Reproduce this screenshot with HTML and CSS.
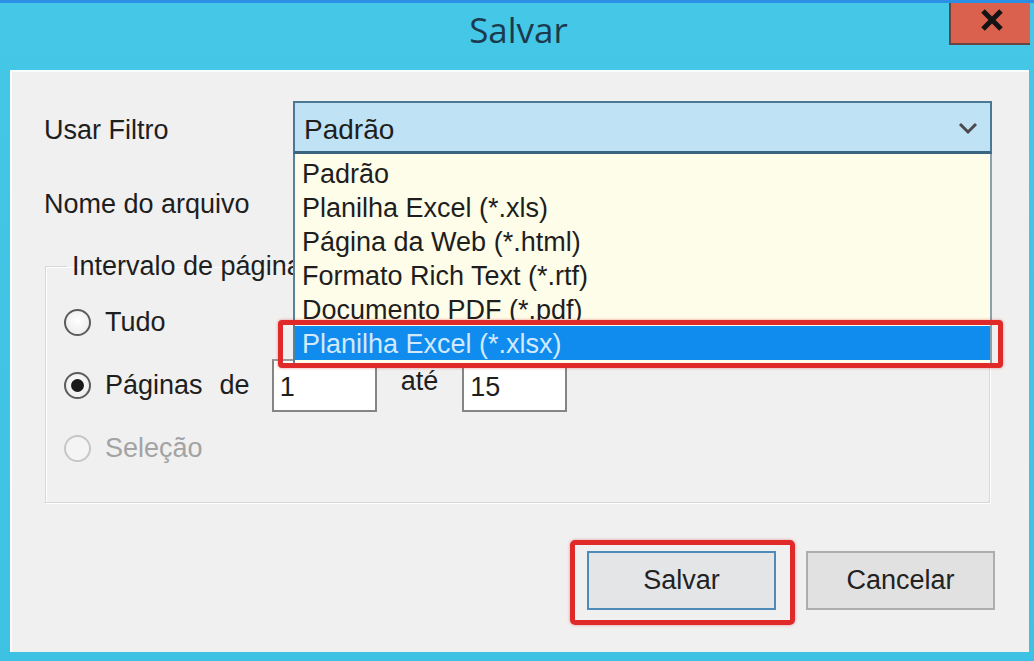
FILE: index.html
```html
<!DOCTYPE html>
<html lang="pt">
<head>
<meta charset="utf-8">
<title>Salvar</title>
<link rel="stylesheet" href="styles.css">
</head>
<body>
<div class="window">
  <div class="titlebar">
    <div class="title">Salvar</div>
    <div class="close" aria-label="Fechar">
      <svg width="24" height="22" viewBox="0 0 24 22"><path d="M3 2 L21 20 M21 2 L3 20" stroke="#141414" stroke-width="5" stroke-linecap="butt"/></svg>
    </div>
  </div>
  <div class="client">
    <div class="row row-filter">
      <div class="label">Usar Filtro</div>
      <div class="combo">
        <span class="combo-text">Padrão</span>
        <svg class="chev" width="20" height="14" viewBox="0 0 20 14"><path d="M2 3 L10 11 L18 3" fill="none" stroke="#4a4a4a" stroke-width="3"/></svg>
      </div>
    </div>
    <div class="row row-name">
      <div class="label">Nome do arquivo</div>
      <div class="textbox"></div>
    </div>
    <fieldset class="group">
      <legend>Intervalo de páginas</legend>
      <div class="opt">
        <span class="radio"></span><span class="opt-text">Tudo</span>
      </div>
      <div class="opt">
        <span class="radio checked"></span><span class="opt-text">Páginas</span>
        <span class="word word-de">de</span>
        <span class="num">1</span>
        <span class="word word-ate">até</span>
        <span class="num">15</span>
      </div>
      <div class="opt disabled">
        <span class="radio"></span><span class="opt-text">Seleção</span>
      </div>
    </fieldset>
    <div class="buttons">
      <div class="btn btn-default">Salvar</div>
      <div class="btn">Cancelar</div>
    </div>
    <ul class="dropdown">
      <li>Padrão</li>
      <li>Planilha Excel (*.xls)</li>
      <li>Página da Web (*.html)</li>
      <li>Formato Rich Text (*.rtf)</li>
      <li>Documento PDF (*.pdf)</li>
      <li class="selected">Planilha Excel (*.xlsx)</li>
    </ul>
  </div>
</div>
</body>
</html>
```
FILE: styles.css
```css
html, body {
  margin: 0;
  padding: 0;
}
body {
  width: 1034px;
  height: 661px;
  overflow: hidden;
  background: #3fc3e4;
  font-family: "Liberation Sans", Arial, sans-serif;
  color: #1e1e1e;
}
.window {
  width: 1034px;
  height: 661px;
  box-sizing: border-box;
  border-top: 3px solid #2b8fe6;
  background: linear-gradient(#45c7e7, #3ec2e3);
}
.titlebar {
  position: relative;
  height: 67px;
  display: flex;
  justify-content: center;
}
.title {
  font-family: "Open Sans", "Noto Sans", sans-serif;
  font-size: 35px;
  line-height: 44px;
  padding-top: 5px;
  color: #1b3a4e;
  padding-left: 3px;
}
.close {
  position: absolute;
  top: 0;
  right: 4px;
  width: 81px;
  height: 42px;
  box-sizing: border-box;
  background: #d9614d;
  border-left: 2px solid #6b4440;
  border-bottom: 2px solid #6b4440;
  display: flex;
  justify-content: center;
  align-items: flex-start;
  padding-top: 6px;
  padding-left: 3px;
}
.client {
  position: relative;
  margin: 0 5px 0 10px;
  height: 582px;
  box-sizing: border-box;
  background: #f0f0f0;
  border-top: 2px solid #fafcfd;
  border-left: 2px solid #fafcfd;
  padding: 29px 37px 0 32px;
  font-size: 27px;
}
.row {
  display: flex;
  align-items: center;
}
.label {
  width: 249px;
  flex: none;
}
.row-filter {
  height: 53px;
}
.row-filter .label {
  padding-top: 6px;
}
.combo {
  flex: 1;
  height: 53px;
  box-sizing: border-box;
  border: 2px solid #4b7892;
  border-bottom: 3px solid #3a6580;
  background: #bfe2f5;
  display: flex;
  align-items: center;
  justify-content: space-between;
  padding: 0 12px 0 9px;
}
.combo-text {
  font-size: 28px;
  padding-top: 5px;
}
.chev {
  margin-top: 2px;
}
.row-name {
  margin-top: 28px;
  height: 44px;
}
.textbox {
  flex: 1;
  height: 44px;
  background: #fff;
  border: 1px solid #7a7a7a;
}
.group {
  margin: 24px 2px 0 1px;
  padding: 14px 18px 27px 18px;
  border: 1px solid #d3d8dc;
  box-shadow: inset 1px 1px 0 #fff, 1px 1px 0 #fff;
  min-width: 0;
}
.group legend {
  margin-left: 3px;
  padding: 0 6px 0 5px;
  line-height: 32px;
}
.opt {
  display: flex;
  align-items: center;
  height: 53px;
}
.opt + .opt {
  margin-top: 10px;
}
.radio {
  width: 27px;
  height: 27px;
  box-sizing: border-box;
  border-radius: 50%;
  border: 2px solid #5c5c5c;
  background: radial-gradient(circle at 50% 40%, #ffffff, #e8e8e8);
  margin-right: 14px;
  flex: none;
  position: relative;
}
.radio.checked::after {
  content: "";
  position: absolute;
  left: 5px;
  top: 5px;
  width: 13px;
  height: 13px;
  border-radius: 50%;
  background: #1a1a1a;
}
.disabled .radio {
  border-color: #c6c6c6;
  background: #f4f4f4;
}
.disabled .opt-text {
  color: #a3a3a3;
}
.word-de {
  margin-left: 17px;
  margin-right: 22px;
}
.word-ate {
  margin: 0 24px 8px 24px;
}
.num {
  width: 105px;
  height: 53px;
  box-sizing: border-box;
  background: #fff;
  border: 2px solid #858585;
  border-top-color: #9a9a9a;
  padding: 9px 0 0 6px;
  line-height: 34px;
}
.buttons {
  display: flex;
  justify-content: flex-end;
  gap: 30px;
  margin-top: 48px;
  margin-right: -3px;
}
.btn {
  width: 189px;
  height: 59px;
  box-sizing: border-box;
  border: 2px solid #adadad;
  background: #e1e1e1;
  display: flex;
  align-items: center;
  justify-content: center;
  color: #222;
  position: relative;
}
.btn-default {
  border-color: #4f8bb8;
  background: #e3e5e7;
}
.btn-default::after {
  content: "";
  position: absolute;
  left: -19px;
  right: -21px;
  top: -13px;
  bottom: -17px;
  border: 5px solid #e02a2a;
  border-radius: 5px;
  box-shadow: 0 0 3px rgba(220, 40, 40, 0.5);
}
.dropdown {
  position: absolute;
  left: 281px;
  top: 82px;
  width: 699px;
  height: 212px;
  box-sizing: border-box;
  margin: 0;
  padding: 2px 0 0 0;
  list-style: none;
  background: #fefde9;
  border: 2px solid #55839c;
  border-top: none;
  border-right: 2px solid #8aa0ac;
}
.dropdown li {
  height: 34px;
  line-height: 36px;
  padding-left: 7px;
  font-size: 27px;
  white-space: nowrap;
}
.dropdown li.selected {
  position: relative;
  background: #0f8cee;
  color: #d2e9ff;
}
.dropdown li.selected::after {
  content: "";
  position: absolute;
  left: -17px;
  right: -13px;
  top: -6px;
  bottom: -8px;
  border: 5px solid #e02a2a;
  border-radius: 4px;
  box-shadow: 0 0 3px rgba(220, 40, 40, 0.5);
}
```
